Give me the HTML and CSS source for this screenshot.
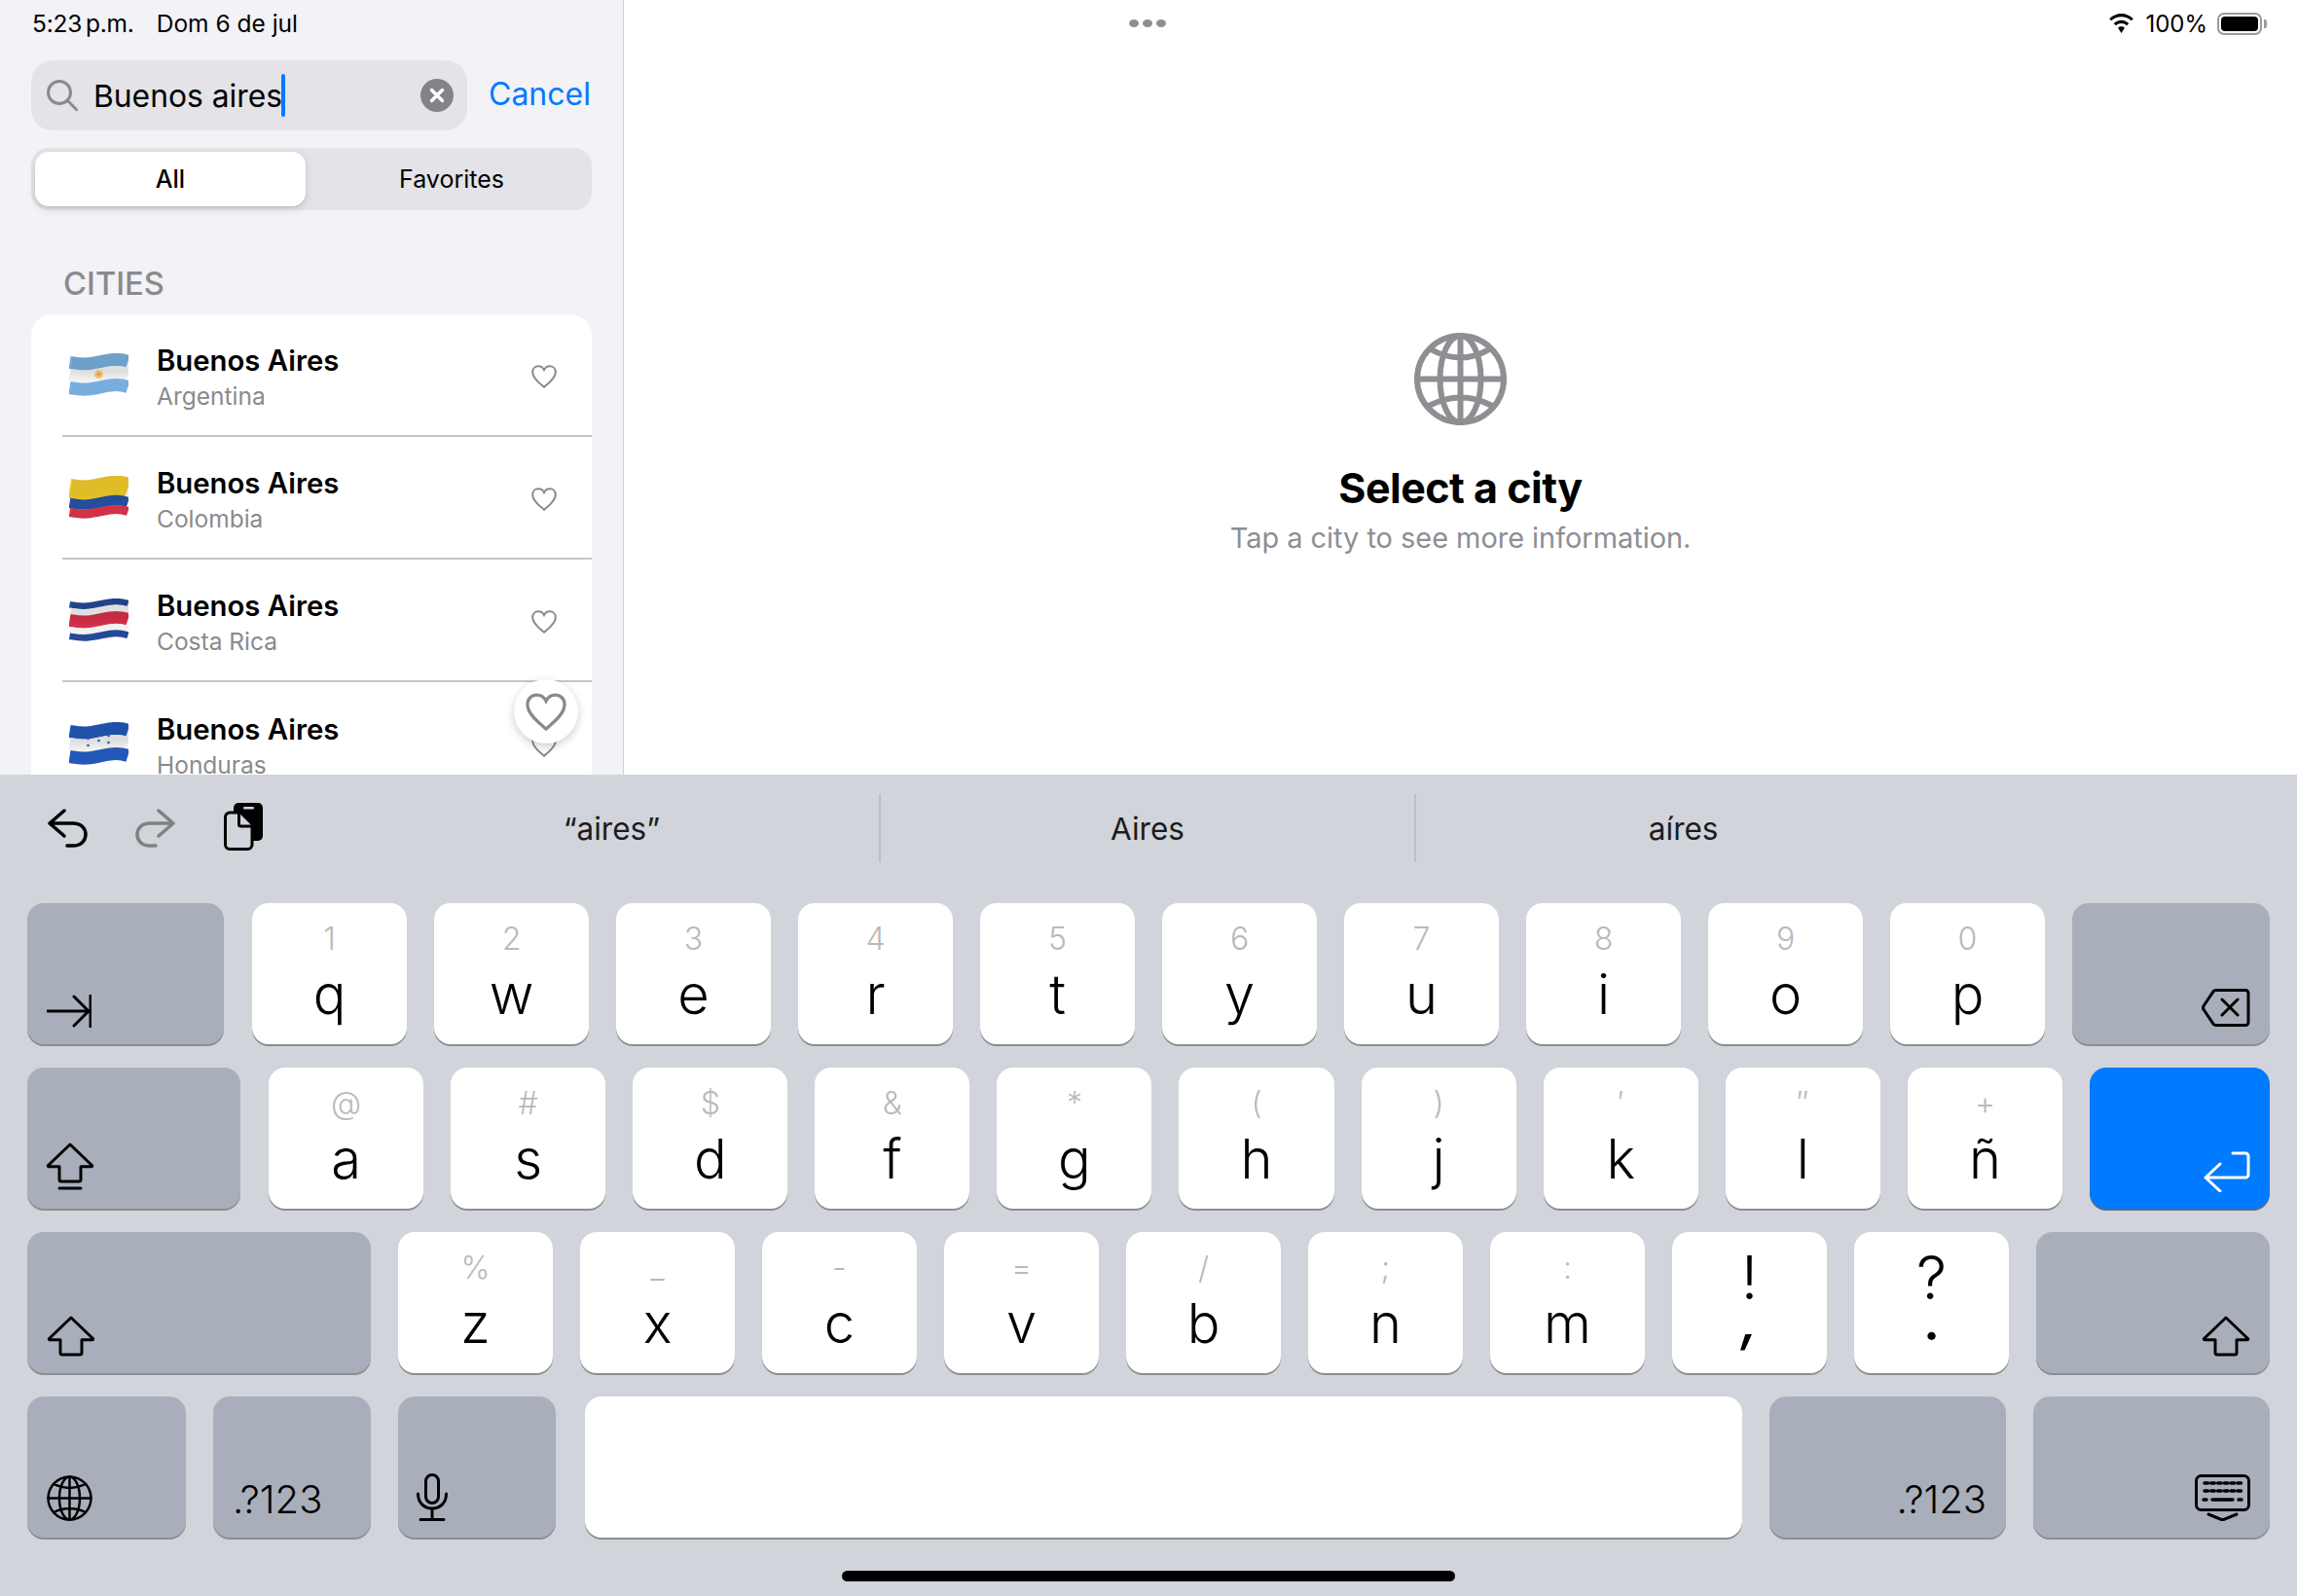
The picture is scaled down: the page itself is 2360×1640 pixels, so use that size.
FILE: index.html
```html
<!DOCTYPE html>
<html lang="en">
<head>
<meta charset="utf-8">
<title>Cities</title>
<link rel="stylesheet" href="styles.css">
</head>
<body>
<svg class="sprite" aria-hidden="true">
  <defs>
    <linearGradient id="sheen" gradientUnits="userSpaceOnUse" x1="0" y1="0" x2="0" y2="44">
      <stop offset="0" stop-color="#000" stop-opacity=".08"/>
      <stop offset=".2" stop-color="#000" stop-opacity="0"/>
      <stop offset=".8" stop-color="#000" stop-opacity="0"/>
      <stop offset="1" stop-color="#000" stop-opacity=".16"/>
    </linearGradient>
    <path id="wave" d="M0 3C6 4 11 5 18 4.500 30 3.500 38 0 48 0 53 0 57 1 60 2"/>
  </defs>
  <symbol id="heart" viewBox="0 0 26 24"><path d="M13 22.800C10 20 1.200 14 1.200 7.400 1.200 3.600 3.900 1.200 7 1.200c2.600 0 4.800 1.400 6 3.900 1.200-2.500 3.400-3.900 6-3.900 3.100 0 5.800 2.400 5.800 6.200C24.800 14 16 20 13 22.800Z"/></symbol>
  <symbol id="shift" viewBox="0 0 50 42"><path d="M25 2 47.500 23.500a.8.8 0 0 1-.6 1.300H36V38a2 2 0 0 1-2 2H16a2 2 0 0 1-2-2V24.800H3.100a.8.8 0 0 1-.6-1.300Z"/></symbol>
</svg>
<div class="top">
  <aside class="sidebar">
    <div class="status status-left"><span class="time">5:23 p.m.</span><span>Dom 6 de jul</span></div>
    <div class="search-row">
      <div class="search">
        <svg class="search-icon" viewBox="0 0 32 32"><circle cx="13" cy="13" r="11.500"/><path d="M21.500 21.500 31 31"/></svg>
        <span class="search-text">Buenos aires</span><span class="caret"></span>
        <svg class="clear" viewBox="0 0 34 34"><circle cx="17" cy="17" r="17"/><path d="m11.500 11.500 11 11m0-11-11 11"/></svg>
      </div>
      <span class="cancel">Cancel</span>
    </div>
    <div class="segmented">
      <div class="seg seg-on">All</div>
      <div class="seg">Favorites</div>
    </div>
    <h2 class="section">CITIES</h2>
    <div class="card">
      <div class="row">
        <svg class="flag" viewBox="0 0 60 44">
          <g fill="none">
            <use href="#wave" y="6.500" stroke="#78aedd" stroke-width="13.200"/>
            <use href="#wave" y="19.500" stroke="#f4f4f4" stroke-width="13"/>
            <use href="#wave" y="32.500" stroke="#78aedd" stroke-width="13.200"/>
            <use href="#wave" y="19.500" stroke="url(#sheen)" stroke-width="39.400"/>
          </g>
          <circle cx="30" cy="21.500" r="4.500" fill="#eec07a"/><circle cx="30" cy="21.500" r="2" fill="#d9a24f"/>
        </svg>
        <div class="names"><div class="city">Buenos Aires</div><div class="country">Argentina</div></div>
        <svg class="heart"><use href="#heart"/></svg>
      </div>
      <div class="row">
        <svg class="flag" viewBox="0 0 60 44">
          <g fill="none">
            <use href="#wave" y="10" stroke="#f2cc2c" stroke-width="20.400"/>
            <use href="#wave" y="25" stroke="#234f9c" stroke-width="10.400"/>
            <use href="#wave" y="34.500" stroke="#d33147" stroke-width="9.200"/>
            <use href="#wave" y="19.500" stroke="url(#sheen)" stroke-width="39.400"/>
          </g>
        </svg>
        <div class="names"><div class="city">Buenos Aires</div><div class="country">Colombia</div></div>
        <svg class="heart"><use href="#heart"/></svg>
      </div>
      <div class="row">
        <svg class="flag" viewBox="0 0 60 44">
          <g fill="none">
            <use href="#wave" y="3.250" stroke="#234a97" stroke-width="6.800"/>
            <use href="#wave" y="9.750" stroke="#f2f2f2" stroke-width="6.800"/>
            <use href="#wave" y="19.500" stroke="#d5304a" stroke-width="13.200"/>
            <use href="#wave" y="29.250" stroke="#f2f2f2" stroke-width="6.800"/>
            <use href="#wave" y="35.750" stroke="#234a97" stroke-width="6.800"/>
            <use href="#wave" y="19.500" stroke="url(#sheen)" stroke-width="39.400"/>
          </g>
        </svg>
        <div class="names"><div class="city">Buenos Aires</div><div class="country">Costa Rica</div></div>
        <svg class="heart"><use href="#heart"/></svg>
      </div>
      <div class="row">
        <svg class="flag" viewBox="0 0 60 44">
          <g fill="none">
            <use href="#wave" y="6.500" stroke="#2258b8" stroke-width="13.200"/>
            <use href="#wave" y="19.500" stroke="#f2f2f2" stroke-width="13"/>
            <use href="#wave" y="32.500" stroke="#2258b8" stroke-width="13.200"/>
            <use href="#wave" y="19.500" stroke="url(#sheen)" stroke-width="39.400"/>
          </g>
          <g fill="#2258b8"><circle cx="19" cy="17" r="1.300"/><circle cx="19" cy="24" r="1.300"/><circle cx="30" cy="19" r="1.300"/><circle cx="40" cy="14" r="1.300"/><circle cx="40" cy="21" r="1.300"/></g>
        </svg>
        <div class="names"><div class="city">Buenos Aires</div><div class="country">Honduras</div></div>
        <svg class="heart"><use href="#heart"/></svg>
      </div>
    </div>
    <div class="heart-pop"><svg class="heart-big"><use href="#heart"/></svg></div>
  </aside>
  <main class="detail">
    <div class="dots"><i></i><i></i><i></i></div>
    <div class="status status-right">
      <svg class="wifi" viewBox="0 0 26 19"><path d="M13 3.200c3.700 0 7.100 1.400 9.700 3.800l2-2.100C21.500 1.900 17.400 0 13 0S4.500 1.900 1.300 4.900l2 2.100C5.900 4.600 9.300 3.200 13 3.200Zm0 6.300c2 0 3.900.8 5.300 2.100l2.100-2.100C18.400 7.600 15.800 6.400 13 6.400s-5.400 1.200-7.400 3.100l2.100 2.100c1.400-1.300 3.300-2.100 5.300-2.100Zm0 3.100c-1.300 0-2.400.5-3.200 1.300L13 19l3.200-5.100c-.8-.8-1.900-1.300-3.200-1.300Z"/></svg>
      <span>100%</span>
      <span class="battery"><i></i></span>
    </div>
    <div class="empty">
      <svg class="globe" viewBox="0 0 95 95"><circle cx="47.500" cy="47.500" r="44.500"/><ellipse cx="47.500" cy="47.500" rx="21" ry="44.500"/><path d="M47.500 3v89M3 47.500h89M17 17Q47.500 34 77 17M15 75Q47.500 58 80 75"/></svg>
      <h1 class="empty-title">Select a city</h1>
      <p class="empty-sub">Tap a city to see more information.</p>
    </div>
  </main>
</div>
<section class="keyboard">
  <div class="assist">
    <div class="assist-tools">
      <svg class="tool" viewBox="0 0 42 40"><path d="M17 2 2 15l15 13M2 15h24c8 0 13 5 13 11.500S34 38 26 38h-6"/></svg>
      <svg class="tool tool-off" viewBox="0 0 42 40"><path d="M25 2l15 13-15 13M40 15H16C8 15 3 20 3 26.500S8 38 16 38h6"/></svg>
      <svg class="tool-clip" viewBox="0 0 40 49"><rect x="10" y="0" width="30" height="39" rx="5" fill="#000"/><rect x="20" y="4" width="11" height="2.500" rx="1.200" fill="#d1d4da"/><path d="M6 10h11l12 12v21a4.500 4.500 0 0 1-4.500 4.500H6A4.500 4.500 0 0 1 1.500 43V14.500A4.500 4.500 0 0 1 6 10Z" fill="#d1d4da" stroke="#000" stroke-width="3"/><path d="M15.500 10.500V22a2 2 0 0 0 2 2H29" fill="#d1d4da" stroke="#000" stroke-width="3"/></svg>
    </div>
    <div class="suggest">
      <span class="sug">“aires”</span>
      <span class="sug">Aires</span>
      <span class="sug">aíres</span>
    </div>
  </div>
  <div class="keys">
    <div class="krow">
      <div class="key fn k-tab"><svg class="ico ico-tab" viewBox="0 0 46 34"><path d="M1 17h41M28 2l15 15-15 15M45 1v32"/></svg></div>
      <div class="key"><span class="hint">1</span><span class="ch">q</span></div>
      <div class="key"><span class="hint">2</span><span class="ch">w</span></div>
      <div class="key"><span class="hint">3</span><span class="ch">e</span></div>
      <div class="key"><span class="hint">4</span><span class="ch">r</span></div>
      <div class="key"><span class="hint">5</span><span class="ch">t</span></div>
      <div class="key"><span class="hint">6</span><span class="ch">y</span></div>
      <div class="key"><span class="hint">7</span><span class="ch">u</span></div>
      <div class="key"><span class="hint">8</span><span class="ch">i</span></div>
      <div class="key"><span class="hint">9</span><span class="ch">o</span></div>
      <div class="key"><span class="hint">0</span><span class="ch">p</span></div>
      <div class="key fn k-del end"><svg class="ico ico-del" viewBox="0 0 50 41"><path d="M15 2.500h30a3 3 0 0 1 3 3v30a3 3 0 0 1-3 3H15a4 4 0 0 1-3-1.300L2.500 23a4 4 0 0 1 0-5L12 3.800a4 4 0 0 1 3-1.300ZM21 12l16 16m0-16L21 28"/></svg></div>
    </div>
    <div class="krow">
      <div class="key fn k-caps"><svg class="ico ico-caps" viewBox="0 0 50 50"><use href="#shift" width="50" height="42" y="-1"/><path d="M14 46h22"/></svg></div>
      <div class="key"><span class="hint">@</span><span class="ch">a</span></div>
      <div class="key"><span class="hint">#</span><span class="ch">s</span></div>
      <div class="key"><span class="hint">$</span><span class="ch">d</span></div>
      <div class="key"><span class="hint">&amp;</span><span class="ch">f</span></div>
      <div class="key"><span class="hint">*</span><span class="ch">g</span></div>
      <div class="key"><span class="hint">(</span><span class="ch">h</span></div>
      <div class="key"><span class="hint">)</span><span class="ch">j</span></div>
      <div class="key"><span class="hint">′</span><span class="ch">k</span></div>
      <div class="key"><span class="hint">″</span><span class="ch">l</span></div>
      <div class="key"><span class="hint">+</span><span class="ch">ñ</span></div>
      <div class="key fn k-return end"><svg class="ico ico-ret" viewBox="0 0 48 42"><path d="M17 13 2 27l15 14M2 27h41a3 3 0 0 0 3-3V5a3 3 0 0 0-3-3H30"/></svg></div>
    </div>
    <div class="krow">
      <div class="key fn k-lshift"><svg class="ico ico-shift"><use href="#shift"/></svg></div>
      <div class="key"><span class="hint">%</span><span class="ch">z</span></div>
      <div class="key"><span class="hint">_</span><span class="ch">x</span></div>
      <div class="key"><span class="hint">-</span><span class="ch">c</span></div>
      <div class="key"><span class="hint">=</span><span class="ch">v</span></div>
      <div class="key"><span class="hint">/</span><span class="ch">b</span></div>
      <div class="key"><span class="hint">;</span><span class="ch">n</span></div>
      <div class="key"><span class="hint">:</span><span class="ch">m</span></div>
      <div class="key"><span class="punct">!</span><span class="punct-low comma">,</span></div>
      <div class="key"><span class="punct">?</span><span class="punct-low">.</span></div>
      <div class="key fn k-rshift end"><svg class="ico ico-shift"><use href="#shift"/></svg></div>
    </div>
    <div class="krow">
      <div class="key fn k-globe"><svg class="ico ico-globe" viewBox="0 0 47 47"><circle cx="23.500" cy="23.500" r="22"/><ellipse cx="23.500" cy="23.500" rx="10.500" ry="22"/><path d="M23.500 1.500v44M1.500 23.500h44M7 9q16.500 8 33 0M7 38q16.500-8 33 0"/></svg></div>
      <div class="key fn k-num"><span class="num">.?123</span></div>
      <div class="key fn k-mic"><svg class="ico ico-mic" viewBox="0 0 32 49"><rect x="9.500" y="1.500" width="13" height="29" rx="6.500"/><path d="M1.500 21c0 9 6 15 14.500 15s14.500-6 14.500-15M16 36v11M4 47.500h24"/></svg></div>
      <div class="key k-space"></div>
      <div class="key fn k-num2 end"><span class="num">.?123</span></div>
      <div class="key fn k-hide end"><svg class="ico ico-hide" viewBox="0 0 57 48"><rect x="1.500" y="1.500" width="54" height="35" rx="5"/><path d="M10 9h38M10 17h38" stroke-width="3.500" stroke-dasharray="3.500 3.300"/><path d="M18 26h21" stroke-width="3.500"/><path d="M9 26h3M45 26h3" stroke-width="3.500"/><path d="M14 41l14.500 6L43 41"/></svg></div>
    </div>
  </div>
  <div class="homebar"></div>
</section>
</body>
</html>
```

FILE: styles.css
```css
* { box-sizing: border-box; }
html, body { margin: 0; padding: 0; }
body {
  width: 2360px;
  height: 1640px;
  overflow: hidden;
  display: flex;
  flex-direction: column;
  font-family: Inter, "Noto Sans", sans-serif;
  color: #000;
  background: #fff;
}
.sprite { position: absolute; width: 0; height: 0; }

.top { position: relative; height: 796px; display: flex; overflow: hidden; flex: none; }

.sidebar {
  position: relative;
  width: 641px;
  flex: none;
  background: #f2f2f7;
  border-right: 1px solid #cfcfd3;
  padding: 0 32px;
  overflow: hidden;
}
.status { height: 48px; display: flex; align-items: center; font-size: 24px; }
.status-left { margin-left: 1px; gap: 23px; font-size: 24.500px; }
.time { word-spacing: -3px; letter-spacing: -.2px; }
.search-row { margin-top: 14px; display: flex; align-items: center; gap: 22px; }
.search {
  width: 448px;
  height: 72px;
  flex: none;
  background: #e3e3e8;
  border-radius: 22px;
  display: flex;
  align-items: center;
  padding: 0 14px 0 16px;
}
.search-icon { width: 32px; height: 32px; flex: none; fill: none; stroke: #8a8a8e; stroke-width: 3; stroke-linecap: round; }
.search-text { margin-left: 16px; font-size: 31.800px; white-space: nowrap; margin-right: -1px; }
.caret { width: 4px; height: 44px; background: #007aff; border-radius: 2px; margin-right: auto; }
.clear { width: 34px; height: 34px; flex: none; }
.clear circle { fill: #838388; }
.clear path { stroke: #fff; stroke-width: 3.500; stroke-linecap: round; fill: none; }
.cancel { color: #007aff; font-size: 32px; line-height: 40px; margin-top: -3px; white-space: nowrap; }

.segmented {
  margin-top: 18px;
  height: 64px;
  background: #e3e3e8;
  border-radius: 18px;
  display: flex;
  padding: 4px;
}
.seg { flex: 1; display: flex; align-items: center; justify-content: center; font-size: 25px; padding-left: 10px; }
.seg-on {
  flex: none;
  width: 278px;
  background: #fff;
  border-radius: 14px;
  font-weight: 500;
  padding-left: 0;
  box-shadow: 0 3px 8px rgba(0,0,0,.12), 0 1px 2px rgba(0,0,0,.1);
}
.section { margin: 56px 0 0 33px; height: 51px; font-size: 32.700px; line-height: 38px; font-weight: 500; color: #8a8a8e; }

.card { background: #fff; border-radius: 22px 22px 0 0; }
.row {
  height: 126px;
  display: flex;
  align-items: center;
  margin-left: 32px;
  position: relative;
  border-bottom: 2px solid #c6c6c8;
}
.row:last-child { border-bottom: 0; }
.flag { width: 61px; height: 44px; margin-left: 7px; flex: none; overflow: hidden; }
.names { margin: 5px 0 0 29px; flex: 1; }
.city { font-size: 29.300px; font-weight: 600; line-height: 38px; }
.country { font-size: 24.500px; line-height: 34px; color: #8a8a8e; }
.heart { width: 26px; height: 24px; margin: 3px 36px 0 0; fill: none; stroke: #8a8a8e; stroke-width: 2; flex: none; }
.heart-pop {
  position: absolute;
  left: 528px;
  top: 698px;
  width: 66px;
  height: 66px;
  border-radius: 50%;
  background: #fff;
  box-shadow: 0 3px 10px rgba(0,0,0,.2);
  display: flex;
  align-items: center;
  justify-content: center;
}
.heart-big { width: 42px; height: 39px; fill: none; stroke: #8a8a8e; stroke-width: 2; }

.detail { flex: 1; position: relative; background: #fff; }
.dots { position: absolute; left: 519px; top: 20px; display: flex; gap: 4px; }
.dots i { width: 10px; height: 8px; border-radius: 50%; background: #8e8e93; display: block; }
.status-right { justify-content: flex-end; padding-right: 30px; gap: 10px; }
.wifi { width: 29px; height: 20px; fill: #000; }
.battery {
  width: 46px;
  height: 23px;
  border: 2px solid #9a9a9a;
  border-radius: 7px;
  padding: 2px;
  position: relative;
  margin-right: 6px;
  display: block;
}
.battery::after { content: ""; position: absolute; right: -7px; top: 5px; width: 3px; height: 9px; background: #9a9a9a; border-radius: 0 2px 2px 0; }
.battery i { display: block; width: 100%; height: 100%; background: #000; border-radius: 4px; }
.empty { display: flex; flex-direction: column; align-items: center; padding-top: 294px; }
.globe { width: 95px; height: 95px; fill: none; stroke: #8e8e93; stroke-width: 6; }
.empty-title { margin: 37px 0 0; font-size: 43px; line-height: 54px; font-weight: 700; letter-spacing: -.5px; }
.empty-sub { margin: 6px 0 0; font-size: 28.900px; line-height: 38px; color: #8e8e93; }

.keyboard { flex: 1; background: #d1d4da; position: relative; }
.assist { height: 110px; display: flex; align-items: center; padding-left: 49px; margin-bottom: 22px; }
.assist-tools { display: flex; align-items: center; width: 221px; flex: none; }
.tool { width: 42px; height: 40px; fill: none; stroke: #000; stroke-width: 3.500; stroke-linecap: round; stroke-linejoin: round; margin-right: 47px; }
.tool-off { stroke: #808080; }
.tool-clip { width: 40px; height: 49px; margin-left: 3px; margin-top: -3px; }
.suggest { position: absolute; left: 354px; top: 20px; width: 1650px; height: 70px; display: flex; }
.sug { flex: 1; display: flex; align-items: center; justify-content: center; font-size: 31.500px; color: #1c1c1e; border-left: 2px solid #bcbfc5; }
.sug:first-child { border-left: 0; }

.keys { padding: 0 28px; display: flex; flex-direction: column; gap: 24px; }
.krow { display: flex; gap: 28px; height: 145px; }
.key {
  flex: 1 1 0;
  min-width: 0;
  background: #fff;
  border-radius: 17px;
  box-shadow: 0 2px 0 #8c8d90;
  display: flex;
  flex-direction: column;
  align-items: center;
  position: relative;
}
.key.fn { flex: none; background: #a9afba; align-items: flex-start; justify-content: flex-end; padding: 0 20px 17px; }
.key.fn.end { align-items: flex-end; }
.k-tab { width: 202px; margin-right: 1px; }
.k-del { width: 203px; }
.k-caps { width: 219px; margin-right: 1px; }
.key.k-return { width: 185px; background: #007aff; box-shadow: 0 2px 0 #606a80; }
.k-lshift { width: 353px; }
.k-rshift { width: 240px; }
.k-globe { width: 163px; }
.k-num { width: 162px; }
.k-mic { width: 162px; margin-right: 2px; }
.k-space { flex: 1 1 0; }
.k-num2 { width: 243px; }
.k-hide { width: 243px; }
.hint { margin-top: 17px; height: 40px; line-height: 40px; font-size: 32px; font-weight: 300; color: #b9b9bb; }
.ch { font-size: 56px; line-height: 64px; font-weight: 320; margin-top: 5px; }
.punct { font-size: 62px; line-height: 54px; font-weight: 300; margin-top: 20px; }
.punct-low { font-size: 58px; line-height: 32px; font-weight: 500; }
.comma { font-style: italic; }
.num { font-size: 40px; line-height: 44px; font-weight: 300; }
.key.k-num { padding-left: 20px; }
.ico { display: block; fill: none; stroke: #000; stroke-width: 3; stroke-linecap: round; stroke-linejoin: round; }
.ico-tab { width: 46px; height: 34px; }
.ico-del { width: 50px; height: 41px; }
.ico-caps { width: 50px; height: 50px; overflow: visible; margin-left: -1px; }
.ico-ret { width: 48px; height: 42px; stroke: #fff; }
.ico-shift { width: 50px; height: 42px; }
.ico-globe { width: 47px; height: 47px; stroke-width: 2.500; }
.ico-mic { width: 32px; height: 49px; margin-left: -1px; }
.ico-hide { width: 57px; height: 48px; }
.homebar { position: absolute; left: 865px; top: 818px; width: 630px; height: 11px; border-radius: 6px; background: #000; }
```
